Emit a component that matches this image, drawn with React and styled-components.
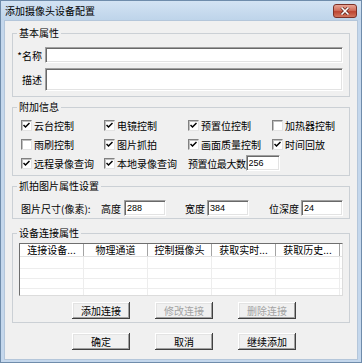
import React from 'react'
import styled, { createGlobalStyle } from 'styled-components'

const GlobalStyle = createGlobalStyle`
  html, body {
    margin: 0;
    padding: 0;
    background: #fff;
  }
  body {
    font-family: "Noto Sans CJK SC", "Noto Sans", sans-serif;
    font-size: 10px;
    color: #000;
  }
`;

const Window = styled.div`
  width: 362px;
  height: 363px;
  box-sizing: border-box;
  border: 1px solid #6f8cab;
  background: #c4d7ec;
  padding: 0 3px 2px 3px;
  display: flex;
  flex-direction: column;
`;

const TitleBar = styled.div`
  height: 19px;
  flex: none;
  display: flex;
  align-items: center;
  justify-content: space-between;
  background: linear-gradient(#d3e3f3, #bed4ea);
  margin: 0 -3px;
  padding: 0 4px;
`;

const Title = styled.span`
  line-height: 14px;
  white-space: nowrap;
`;

const CloseButton = styled.div`
  width: 24px;
  height: 14px;
  box-sizing: border-box;
  border: 1px solid #7c3128;
  border-radius: 3px;
  background: linear-gradient(#e8a596, #d06e5c 45%, #bd4632 55%, #d2765f);
  display: flex;
  align-items: center;
  justify-content: center;
`;

const Client = styled.div`
  flex: 1;
  background: #f0f0f0;
  padding: 0 8px;
  display: flex;
  flex-direction: column;
  box-shadow: inset 0 0 0 1px #b4c6da;
`;

const Group = styled.fieldset`
  margin: ${p => p.$top}px 0 0;
  padding: 0;
  min-width: 0;
  border: 1px solid #cbd0d5;
`;

const Legend = styled.legend`
  margin-left: 4px;
  padding: 0 2px;
  line-height: 14px;
  font-size: 10px;
`;

const GroupBody = styled.div`
  padding: ${p => p.$pad};
`;

const FieldRow = styled.div`
  display: flex;
  align-items: center;
  & + & {
    margin-top: 5px;
  }
`;

const FieldLabel = styled.span`
  width: 26px;
  margin-right: 3px;
  text-align: right;
  white-space: nowrap;
  flex: none;
`;

const TextBox = styled.input`
  box-sizing: border-box;
  height: ${p => p.$h || 16}px;
  width: ${p => (p.$w ? `${p.$w}px` : 'auto')};
  flex: ${p => (p.$w ? 'none' : '1')};
  min-width: 0;
  margin: 0;
  padding: 0 2px;
  border: 1px solid;
  border-color: #a0a0a0 #fff #fff #a0a0a0;
  box-shadow: inset 1px 1px #696969, inset -1px -1px #e3e3e3;
  background: #fff;
  font-family: "Liberation Sans", sans-serif;
  font-size: 9px;
  color: #000;
  outline: none;
`;

const CheckGrid = styled.div`
  display: grid;
  grid-template-columns: 83px 84px 84px 1fr;
  grid-auto-rows: 16px;
  row-gap: 3px;
`;

const CheckItem = styled.label`
  display: flex;
  align-items: center;
  gap: 2px;
  white-space: nowrap;
`;

const Box = styled.span`
  width: 11px;
  height: 11px;
  box-sizing: border-box;
  flex: none;
  background: #fff;
  border: 1px solid;
  border-color: #808080 #e3e3e3 #e3e3e3 #808080;
  box-shadow: inset 1px 1px #c0c0c0;
  display: flex;
  align-items: center;
  justify-content: center;
`;

const SpanCell = styled.div`
  grid-column: span 2;
  display: flex;
  align-items: center;
  white-space: nowrap;
  letter-spacing: -0.4px;
`;

const SizeRow = styled.div`
  display: grid;
  grid-template-columns: 80px 23px 42px 19px 22px 42px 20px 32px 42px;
  align-items: center;
  height: 16px;
  white-space: nowrap;
`;

const ListView = styled.div`
  height: 53px;
  box-sizing: border-box;
  border: 1px solid;
  border-color: #6e6e6e #dcdcdc #dcdcdc #6e6e6e;
  background: #fff;
  overflow: hidden;
`;

const ListHeader = styled.div`
  display: flex;
  height: 13px;
  box-sizing: border-box;
  border-bottom: 1px solid #e2e2e2;
`;

const HeaderCell = styled.div`
  width: 64px;
  flex: none;
  box-sizing: border-box;
  border-right: 1px solid #a4a4a4;
  text-align: center;
  line-height: 12px;
  white-space: nowrap;
`;

const ListRow = styled.div`
  display: flex;
  height: ${p => p.$h}px;
  box-sizing: border-box;
  border-bottom: 1px solid #ededed;
`;

const ListCell = styled.div`
  width: 64px;
  flex: none;
  box-sizing: border-box;
  border-right: 1px solid #ededed;
`;

const ButtonRow = styled.div`
  display: flex;
  gap: 25px;
  padding-left: ${p => p.$left}px;
  margin-top: ${p => p.$top}px;
`;

const Button = styled.button`
  width: 58px;
  height: 17px;
  padding: 0;
  margin: 0;
  border: none;
  background: #f0f0f0;
  font-family: "Noto Sans CJK SC", sans-serif;
  font-size: 10px;
  line-height: 15px;
  color: ${p => (p.disabled ? '#a3a3a3' : '#000')};
  box-shadow: inset -1px -1px #404040, inset 1px 1px #fff, inset -2px -2px #a0a0a0, inset 2px 2px #e3e3e3;
`;

function Check({ checked, children }) {
  return (
    <CheckItem>
      <Box>
        {checked && (
          <svg width="7" height="7" viewBox="0 0 7 7">
            <path d="M0.5 3 L2.5 5 L6.5 1" fill="none" stroke="#000" strokeWidth="1.5" />
          </svg>
        )}
      </Box>
      {children}
    </CheckItem>
  );
}

const columns = ['连接设备...', '物理通道', '控制摄像头', '获取实时...', '获取历史...'];

export default function App() {
  return (
    <>
      <GlobalStyle />
      <Window>
        <TitleBar>
          <Title>添加摄像头设备配置</Title>
          <CloseButton>
            <svg width="10" height="8" viewBox="0 0 10 8">
              <path d="M1.5 0.5 L8.5 7.5 M8.5 0.5 L1.5 7.5" stroke="#5a2019" strokeWidth="3" />
              <path d="M1.5 0.5 L8.5 7.5 M8.5 0.5 L1.5 7.5" stroke="#fff" strokeWidth="1.6" />
            </svg>
          </CloseButton>
        </TitleBar>
        <Client>
          <Group $top={6}>
            <Legend>基本属性</Legend>
            <GroupBody $pad="7px 6px 5px 3px">
              <FieldRow>
                <FieldLabel>*名称</FieldLabel>
                <TextBox readOnly defaultValue="" $h={16} />
              </FieldRow>
              <FieldRow>
                <FieldLabel>描述</FieldLabel>
                <TextBox readOnly defaultValue="" $h={23} />
              </FieldRow>
            </GroupBody>
          </Group>

          <Group $top={3}>
            <Legend>附加信息</Legend>
            <GroupBody $pad="3px 6px 4px 8px">
              <CheckGrid>
                <Check checked>云台控制</Check>
                <Check checked>电镜控制</Check>
                <Check checked>预置位控制</Check>
                <Check>加热器控制</Check>
                <Check>雨刷控制</Check>
                <Check checked>图片抓拍</Check>
                <Check checked>画面质量控制</Check>
                <Check checked>时间回放</Check>
                <Check checked>远程录像查询</Check>
                <Check checked>本地录像查询</Check>
                <SpanCell>
                  预置位最大数
                  <TextBox readOnly defaultValue="256" $w={34} />
                </SpanCell>
              </CheckGrid>
            </GroupBody>
          </Group>

          <Group $top={3}>
            <Legend>抓拍图片属性设置</Legend>
            <GroupBody $pad="7px 6px 2px 8px">
              <SizeRow>
                <span>图片尺寸(像素):</span>
                <span>高度</span>
                <TextBox readOnly defaultValue="288" $w={42} />
                <span />
                <span>宽度</span>
                <TextBox readOnly defaultValue="384" $w={42} />
                <span />
                <span>位深度</span>
                <TextBox readOnly defaultValue="24" $w={42} />
              </SizeRow>
            </GroupBody>
          </Group>

          <Group $top={7}>
            <Legend>设备连接属性</Legend>
            <GroupBody $pad="3px 6px 3px 6px">
              <ListView>
                <ListHeader>
                  {columns.map(c => (
                    <HeaderCell key={c}>{c}</HeaderCell>
                  ))}
                </ListHeader>
                {[12, 10, 10, 10].map((h, i) => (
                  <ListRow key={i} $h={h}>
                    {columns.map(c => (
                      <ListCell key={c} />
                    ))}
                  </ListRow>
                ))}
              </ListView>
              <ButtonRow $left={53} $top={6}>
                <Button>添加连接</Button>
                <Button disabled>修改连接</Button>
                <Button disabled>删除连接</Button>
              </ButtonRow>
            </GroupBody>
          </Group>

          <ButtonRow $left={60} $top={10}>
            <Button>确定</Button>
            <Button>取消</Button>
            <Button>继续添加</Button>
          </ButtonRow>
        </Client>
      </Window>
    </>
  );
}
